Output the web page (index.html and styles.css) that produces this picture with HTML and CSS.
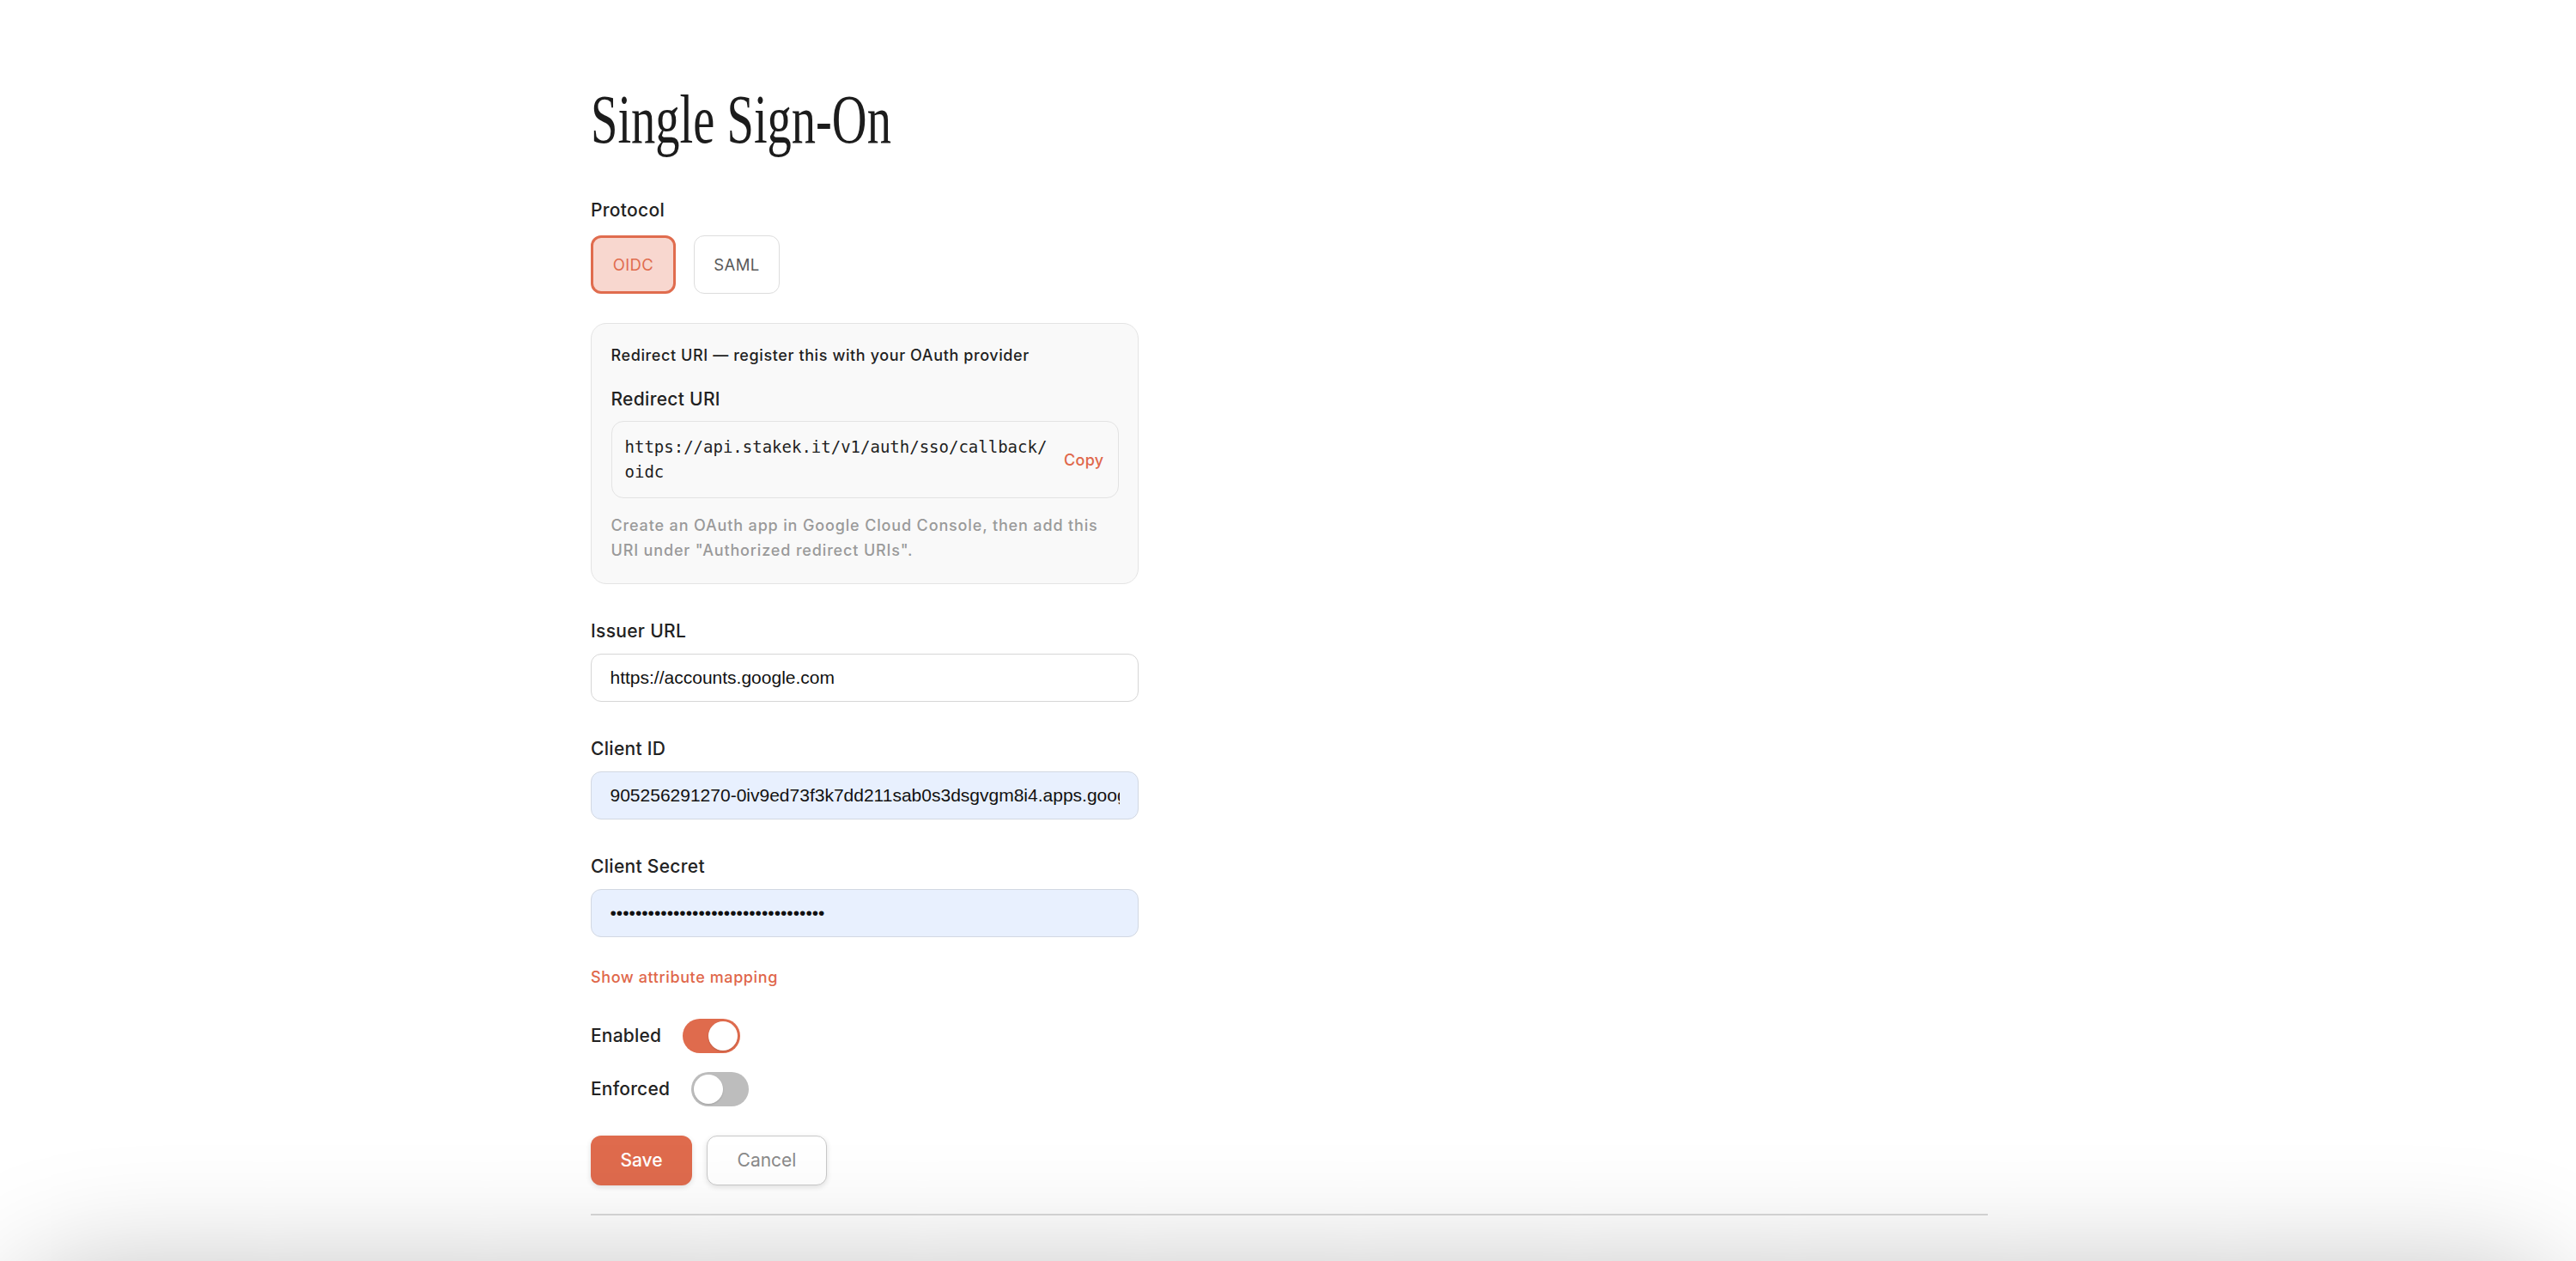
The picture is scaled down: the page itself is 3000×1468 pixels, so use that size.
FILE: index.html
```html
<!DOCTYPE html>
<html lang="en">
<head>
<meta charset="utf-8">
<title>Single Sign-On</title>
<link rel="stylesheet" href="styles.css">
</head>
<body>
<div class="page">
  <h1 class="title">Single Sign-On</h1>
  <div class="form">
    <div class="label">Protocol</div>
    <div class="protocols">
      <button class="proto proto-active">OIDC</button>
      <button class="proto">SAML</button>
    </div>
    <div class="info">
      <div class="info-head">Redirect URI — register this with your OAuth provider</div>
      <div class="label label-inner">Redirect URI</div>
      <div class="code-box">
        <div class="code-text">https://api.stakek.it/v1/auth/sso/callback/oidc</div>
        <span class="copy">Copy</span>
      </div>
      <p class="help">Create an OAuth app in Google Cloud Console, then add this URI under "Authorized redirect URIs".</p>
    </div>
    <div class="field">
      <label class="label">Issuer URL</label>
      <input class="input" type="text" value="https://accounts.google.com">
    </div>
    <div class="field">
      <label class="label">Client ID</label>
      <input class="input input-filled" type="text" value="905256291270-0iv9ed73f3k7dd211sab0s3dsgvgm8i4.apps.googleusercontent.com">
    </div>
    <div class="field">
      <label class="label">Client Secret</label>
      <input class="input input-filled" type="password" value="GOCSPX-abcdefghijklmnopqrstuvwxyz1">
    </div>
    <div class="link">Show attribute mapping</div>
    <div class="toggles">
      <div class="toggle-row">
        <span class="toggle-label">Enabled</span>
        <span class="switch switch-on"><span class="knob"></span></span>
      </div>
      <div class="toggle-row">
        <span class="toggle-label">Enforced</span>
        <span class="switch"><span class="knob"></span></span>
      </div>
    </div>
    <div class="actions">
      <button class="btn btn-primary">Save</button>
      <button class="btn btn-secondary">Cancel</button>
    </div>
  </div>
  <div class="divider"></div>
</div>
<div class="sheet"></div>
</body>
</html>
```

FILE: styles.css
```css
html, body {
  margin: 0;
  padding: 0;
  background: #ffffff;
  overflow: hidden;
}
body {
  font-family: Inter, "Noto Sans", sans-serif;
  color: #1f1f1f;
}
.page {
  width: 1627px;
  margin-left: calc(50% - 812px);
  padding-top: 99px;
}
.title {
  margin: 0 0 49.5px 0;
  font-family: "Liberation Serif", "Times New Roman", serif;
  font-weight: 400;
  font-size: 80px;
  line-height: 80px;
  color: #1c1c1c;
  transform: scaleX(0.706);
  transform-origin: left center;
  white-space: nowrap;
}
.form {
  width: 638px;
  display: flex;
  flex-direction: column;
}
.label {
  display: block;
  font-size: 21px;
  line-height: 31.5px;
  font-weight: 500;
  color: #222222;
  letter-spacing: 0.3px;
}
.protocols {
  display: flex;
  gap: 21px;
  margin-top: 14px;
}
.proto {
  box-sizing: border-box;
  width: 100px;
  height: 68px;
  border: 1.5px solid #dddddd;
  border-radius: 12px;
  background: #ffffff;
  font-family: Inter, sans-serif;
  font-size: 18.5px;
  font-weight: 400;
  color: #5a5a5a;
  padding: 0;
  letter-spacing: 0.4px;
}
.proto-active {
  width: 99px;
  border: 3px solid #e06c4e;
  background: #f8d7cf;
  color: #e06c4e;
}
.info {
  margin-top: 34px;
  border: 1.5px solid #e4e4e4;
  border-radius: 18px;
  background: #f9f9f9;
  padding: 23px 22.5px 23.5px 22.5px;
}
.info-head {
  font-size: 18px;
  line-height: 27px;
  font-weight: 500;
  color: #1f1f1f;
  letter-spacing: 0.6px;
}
.label-inner {
  margin-top: 21.5px;
}
.code-box {
  margin-top: 10px;
  display: flex;
  align-items: center;
  gap: 12px;
  border: 1.5px solid #e3e3e3;
  border-radius: 14px;
  background: #f9f9f9;
  padding: 15px 16px 15px 15px;
}
.code-text {
  flex: 1;
  font-family: "DejaVu Sans Mono", "Liberation Mono", monospace;
  font-size: 19px;
  line-height: 29px;
  color: #1f1f1f;
  word-break: break-all;
}
.copy {
  font-size: 18px;
  font-weight: 500;
  color: #e0674a;
  letter-spacing: 0.3px;
}
.help {
  margin: 17px 0 0 0;
  font-size: 18px;
  line-height: 29px;
  font-weight: 500;
  color: #9a9a9a;
  letter-spacing: 0.85px;
}
.field {
  margin-top: 39.5px;
  display: flex;
  flex-direction: column;
  gap: 10px;
}
.input {
  box-sizing: border-box;
  width: 638px;
  height: 56px;
  border: 1.5px solid #d6d6d6;
  border-radius: 12px;
  background: #ffffff;
  padding: 0 21.5px;
  font-family: "Liberation Sans", Arial, sans-serif;
  font-size: 21px;
  color: #111111;
  outline: none;
}
.input-filled {
  background: #e8f0fe;
  border-color: #d2d8e2;
}
.link {
  margin-top: 33px;
  font-size: 18px;
  line-height: 27px;
  font-weight: 500;
  color: #e0674a;
  letter-spacing: 0.6px;
}
.toggles {
  margin-top: 35px;
  display: flex;
  flex-direction: column;
  gap: 22px;
}
.toggle-row {
  display: flex;
  align-items: center;
  gap: 25px;
}
.toggle-label {
  font-size: 21px;
  font-weight: 500;
  color: #222222;
  letter-spacing: 0.2px;
}
.switch {
  position: relative;
  width: 67px;
  height: 40px;
  border-radius: 20px;
  background: #bdbdbd;
}
.knob {
  position: absolute;
  top: 3px;
  left: 3px;
  width: 34px;
  height: 34px;
  border-radius: 50%;
  background: #ffffff;
  box-shadow: 0 1px 2px rgba(0, 0, 0, 0.15);
}
.switch-on {
  background: #df6b4d;
}
.switch-on .knob {
  left: 30px;
}
.actions {
  margin-top: 34px;
  display: flex;
  gap: 17px;
}
.btn {
  box-sizing: border-box;
  height: 58px;
  border-radius: 12px;
  font-family: Inter, sans-serif;
  font-size: 21px;
  font-weight: 500;
  box-shadow: 0 2px 6px rgba(0, 0, 0, 0.12);
  padding: 0;
}
.btn-primary {
  width: 118px;
  border: none;
  background: #df6b4d;
  color: #ffffff;
}
.btn-secondary {
  width: 140px;
  border: 1.5px solid #c9c9c9;
  background: #ffffff;
  color: #8a8a8a;
  font-weight: 400;
}
.divider {
  margin-top: 33px;
  height: 2.5px;
  background: #dadada;
}
.sheet {
  position: fixed;
  left: 24px;
  right: 24px;
  top: 1490px;
  height: 300px;
  border-radius: 80px;
  background: #dcdcdc;
  box-shadow: 0 0 140px 10px rgba(0, 0, 0, 0.26);
}
```
